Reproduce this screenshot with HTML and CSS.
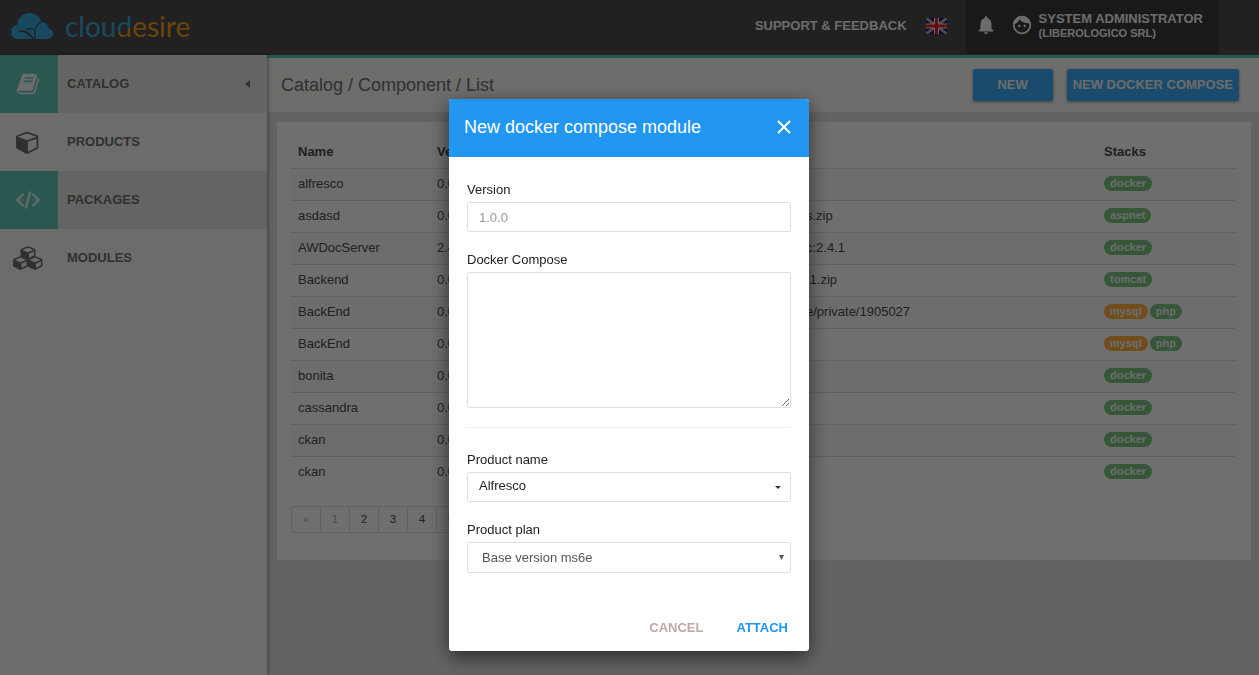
FILE: index.html
```html
<!DOCTYPE html>
<html lang="en">
<head>
<meta charset="utf-8">
<title>Cloudesire - Components</title>
<link rel="stylesheet" href="styles.css">
</head>
<body>
<div class="app">
  <header class="topbar">
    <a class="brand" href="#">
      <svg class="brand-cloud" viewBox="0 0 42 26" aria-hidden="true">
        <path fill="#36a9d6" d="M6.500 12C6.500 5 12 0 18.500 0c6 0 11 4 12 9 4 0 6.500 2.500 7 6.500 3 .8 4.500 2.800 4.500 5 0 3-2.500 5.500-6 5.500H6.500C3 26 0 23 0 19c0-3.800 2.500-6.600 6.500-7z"/>
        <path fill="#4d4d4d" d="M6 18.500c6-2.500 12-1.500 17 7.500h-1.500c-4-5-9-8-15.500-7.500z"/>
        <path fill="none" stroke="#4d4d4d" stroke-width="1.300" d="M24 26c-1-9 .5-16 7-17.200M15.500 16.500c3-1.300 6-1.300 8.300.5"/>
      </svg>
      <span class="brand-name">clou<span class="brand-d">d</span><span class="brand-end">esire</span></span>
    </a>
    <div class="tools">
      <a class="support" href="#">SUPPORT &amp; FEEDBACK</a>
      <button class="icon-btn" aria-label="Language: English">
        <svg width="21" height="16" viewBox="0 0 21 16">
          <path fill="#171782" d="M0 0h21v16H0z"/>
          <path stroke="#e8e8e8" stroke-width="2.400" d="M0 0l21 16M21 0L0 16"/>
          <path stroke="#d22" stroke-width=".8" d="M0 0l21 16M21 0L0 16"/>
          <path stroke="#e8e8e8" stroke-width="5" d="M10.500 0v16M0 8h21"/>
          <path stroke="#d22" stroke-width="3" d="M10.500 0v16M0 8h21"/>
        </svg>
      </button>
      <div class="account">
        <button class="icon-btn" aria-label="Notifications">
          <svg width="22" height="22" viewBox="0 0 24 24" fill="currentColor"><path d="M12 22c1.100 0 2-.9 2-2h-4c0 1.100.89 2 2 2zm6-6v-5c0-3.070-1.640-5.640-4.500-6.320V4c0-.83-.67-1.500-1.500-1.500s-1.500.67-1.500 1.500v.68C7.630 5.360 6 7.920 6 11v5l-2 2v1h16v-1l-2-2z"/></svg>
        </button>
        <button class="user">
          <svg width="22" height="22" viewBox="0 0 24 24" fill="currentColor" aria-hidden="true"><path d="M9 11.750c-.69 0-1.250.56-1.250 1.250s.56 1.250 1.250 1.250 1.250-.56 1.250-1.250-.56-1.250-1.250-1.250zm6 0c-.69 0-1.250.56-1.250 1.250s.56 1.250 1.250 1.250 1.250-.56 1.250-1.250-.56-1.250-1.250-1.250zM12 2C6.480 2 2 6.480 2 12s4.480 10 10 10 10-4.480 10-10S17.520 2 12 2zm0 18c-4.410 0-8-3.590-8-8 0-.29.02-.58.05-.86 2.360-1.050 4.230-2.980 5.210-5.370C11.070 8.330 14.050 10 17.420 10c.78 0 1.530-.09 2.250-.26.21.71.33 1.470.33 2.260 0 4.410-3.590 8-8 8z"/></svg>
          <span class="user-text"><span>SYSTEM ADMINISTRATOR</span><small>(LIBEROLOGICO SRL)</small></span>
        </button>
      </div>
    </div>
  </header>

  <div class="columns">
    <nav class="sidebar">
      <a class="item active" href="#">
        <span class="item-icon"><svg width="24" height="24" viewBox="0 0 1792 1792" fill="currentColor"><path d="M1703 478q40 57 18 129l-275 906q-19 64-76.500 107.500t-122.500 43.500h-923q-77 0-148.500-53.500t-99.500-131.500q-24-67-2-127 0-4 3-27t4-37q1-8-3-21.500t-3-19.500q2-11 8-21t16.500-23.500 16.500-23.500q23-38 45-91.500t30-91.500q3-10 .5-30t-.5-28q3-11 17-28t17-23q21-36 42-92t25-90q1-9-2.500-32t.5-28q4-13 22-30.500t22-22.500q19-26 42.500-84.500t27.500-96.500q1-8-3-25.500t-2-26.500q2-8 9-18t18-23 17-21q8-12 16.500-30.500t15-35 16-36 19.500-32 26.500-23.500 36-11.500 47.500 5.500l-1 3q38-9 51-9h761q74 0 114 56t18 130l-274 906q-36 119-71.500 153.500t-128.500 34.500h-869q-27 0-38 15-11 16-1 43 24 70 144 70h923q29 0 56-15.500t35-41.500l300-987q7-22 5-57 38 15 59 43zm-1064 2q-4 13 2 22.500t20 9.500h608q13 0 25.500-9.500t16.500-22.500l21-64q4-13-2-22.500t-20-9.500h-608q-13 0-25.500 9.500t-16.500 22.500zm-83 256q-4 13 2 22.500t20 9.500h608q13 0 25.500-9.500t16.500-22.500l21-64q4-13-2-22.500t-20-9.500h-608q-13 0-25.500 9.500t-16.500 22.500z"/></svg></span>
        <span class="item-label">CATALOG</span>
        <svg class="item-caret" width="5" height="8" viewBox="0 0 5 8" fill="currentColor"><path d="M5 0v8L0 4z"/></svg>
      </a>
      <a class="item" href="#">
        <span class="item-icon"><svg width="24" height="24" viewBox="0 0 1792 1792" fill="currentColor"><path d="M896 1629l640-349v-636l-640 233v752zm-64-865l698-254-698-254-698 254zm832-252v768q0 35-18 65t-49 47l-704 384q-28 16-61 16t-61-16l-704-384q-31-17-49-47t-18-65v-768q0-40 23-73t61-47l704-256q22-8 44-8t44 8l704 256q38 14 61 47t23 73z"/></svg></span>
        <span class="item-label">PRODUCTS</span>
      </a>
      <a class="item active" href="#">
        <span class="item-icon"><svg width="24" height="18" viewBox="0 0 24 18" fill="none" stroke="currentColor" stroke-width="2"><path d="M7.500 3L1.500 9l6 6M16.500 3l6 6-6 6M14.200 .5L9.800 17.500"/></svg></span>
        <span class="item-label">PACKAGES</span>
      </a>
      <a class="item" href="#">
        <span class="item-icon"><svg width="30" height="24" viewBox="0 0 30 24">
          <defs>
            <g id="cube">
              <path fill="currentColor" d="M7.500 0L14.200 2.800Q15 3.200 15 4v5.500q0 .8-.7 1.200L8.200 13.800q-.7.300-1.400 0L.7 10.700Q0 10.300 0 9.500V4q0-.8.8-1.200z"/>
              <path fill="#f5f5f1" d="M7.500 1.600L13 3.900 7.500 6.200 2 3.900zM8.500 7.700L13.500 5.600v3.700L8.500 11.900z"/>
            </g>
          </defs>
          <use href="#cube" x="7.500"/>
          <use href="#cube" y="10"/>
          <use href="#cube" x="14.500" y="10"/>
        </svg></span>
        <span class="item-label">MODULES</span>
      </a>
    </nav>

    <main class="main">
      <div class="pagehead">
        <h1 class="crumbs">Catalog / Component / List</h1>
        <button class="btn">NEW</button>
        <button class="btn">NEW DOCKER COMPOSE</button>
      </div>
      <section class="panel">
        <table class="grid">
          <colgroup><col class="c-name"><col class="c-version"><col class="c-file"><col class="c-stacks"></colgroup>
          <thead><tr><th>Name</th><th>Version</th><th></th><th>Stacks</th></tr></thead>
          <tbody>
            <tr><td>alfresco</td><td>0.0.1</td><td></td><td><span class="tag">docker</span></td></tr>
            <tr><td>asdasd</td><td>0.0.1</td><td>s.zip</td><td><span class="tag">aspnet</span></td></tr>
            <tr><td>AWDocServer</td><td>2.4.1</td><td>c:2.4.1</td><td><span class="tag">docker</span></td></tr>
            <tr><td>Backend</td><td>0.0.1</td><td>.1.zip</td><td><span class="tag">tomcat</span></td></tr>
            <tr><td>BackEnd</td><td>0.0.1</td><td>e/private/1905027</td><td><span class="tag db">mysql</span><span class="tag">php</span></td></tr>
            <tr><td>BackEnd</td><td>0.0.1</td><td></td><td><span class="tag db">mysql</span><span class="tag">php</span></td></tr>
            <tr><td>bonita</td><td>0.0.1</td><td></td><td><span class="tag">docker</span></td></tr>
            <tr><td>cassandra</td><td>0.0.1</td><td></td><td><span class="tag">docker</span></td></tr>
            <tr><td>ckan</td><td>0.0.1</td><td></td><td><span class="tag">docker</span></td></tr>
            <tr><td>ckan</td><td>0.0.1</td><td></td><td><span class="tag">docker</span></td></tr>
          </tbody>
        </table>
        <div class="pager">
          <button disabled>«</button><button disabled>1</button><button>2</button><button>3</button><button>4</button><button>5</button>
        </div>
      </section>
    </main>
  </div>
</div>

<div class="overlay">
  <form class="modal" role="dialog" aria-labelledby="modal-title">
    <div class="modal-head">
      <h2 id="modal-title">New docker compose module</h2>
      <button type="button" class="close" aria-label="Close"><svg width="14" height="14" viewBox="0 0 14 14" fill="none" stroke="currentColor" stroke-width="2"><path d="M1 1l12 12M13 1L1 13"/></svg></button>
    </div>
    <div class="modal-body">
      <div class="field">
        <label for="version">Version</label>
        <input id="version" class="control" type="text" placeholder="1.0.0">
      </div>
      <div class="field">
        <label for="compose">Docker Compose</label>
        <textarea id="compose" class="control area"></textarea>
      </div>
      <hr>
      <div class="field">
        <label for="product">Product name</label>
        <div class="select">
          <select id="product" class="control"><option>Alfresco</option></select>
          <svg width="6" height="3" viewBox="0 0 6 3"><path d="M0 0h6L3 3z"/></svg>
        </div>
      </div>
      <div class="field">
        <label for="plan">Product plan</label>
        <div class="select plan">
          <select id="plan" class="control"><option>Base version ms6e</option></select>
          <svg width="5" height="5" viewBox="0 0 5 5"><path d="M0 0h5L2.500 5z"/></svg>
        </div>
      </div>
    </div>
    <div class="modal-foot">
      <button type="button" class="link cancel">CANCEL</button>
      <button type="submit" class="link">ATTACH</button>
    </div>
  </form>
</div>
</body>
</html>
```
FILE: styles.css
```css
* { box-sizing: border-box; }
body {
  margin: 0;
  font: 13px/18px "Liberation Sans", Arial, sans-serif;
  color: #333;
}
a { color: inherit; text-decoration: none; }
button, input, select, textarea { font: inherit; color: inherit; }
button { border: 0; background: none; padding: 0; cursor: pointer; }
h1, h2 { margin: 0; font-weight: 400; font-size: 18px; line-height: 24px; }
svg { display: block; flex: none; }

.app { min-height: 100vh; display: flex; flex-direction: column; background: #e2e2e2; }

/* Top bar */
.topbar {
  display: flex; justify-content: space-between;
  height: 55px; padding: 0 40px 0 11px;
  background: #4d4d4d; color: #f5f5f5; font-weight: 700;
}
.brand { display: flex; align-items: center; gap: 12px; padding-bottom: 3px; }
.brand-cloud { width: 42px; height: 26px; }
.brand-name { font: 400 28px/34px Lato, "Open Sans", sans-serif; color: #36a9d6; }
.brand-d {
  background: linear-gradient(155deg, #36a9d6 60%, #ee9a1c 60%);
  background-clip: text; -webkit-background-clip: text; color: transparent;
}
.brand-end { color: #ee9a1c; }
.tools { display: flex; align-items: stretch; gap: 19px; }
.support { align-self: center; padding-bottom: 4px; }
.icon-btn { display: flex; align-items: center; padding-bottom: 4px; }
.account {
  display: flex; gap: 14px; margin-bottom: 1px; padding: 0 16px 0 9px;
  background: #393939; border-radius: 0 0 3px 3px;
}
.user { display: flex; align-items: center; gap: 6px; padding-bottom: 4px; font-weight: 700; text-align: left; }
.user-text { display: flex; flex-direction: column; line-height: 15px; }
.user-text small { font-size: 11px; line-height: 14px; }

/* Sidebar */
.columns { flex: 1; display: flex; }
.sidebar { flex: 0 0 267px; background: #f5f5f1; box-shadow: 1px 0 4px rgba(0, 0, 0, .4); z-index: 1; }
.item { display: flex; align-items: center; height: 58px; font-weight: 700; color: #6e6e6e; }
.item-icon { width: 58px; height: 58px; padding-right: 2px; display: flex; align-items: center; justify-content: center; }
.item-label { flex: 1; padding-left: 9px; }
.item-caret { margin-right: 17px; }
.item.active { background: #e4e4e0; }
.item.active .item-icon { background: #62c6b9; color: #f5f5f5; }

/* Main column */
.main { flex: 1; min-width: 0; border-top: 3px solid #62c6b9; }
.pagehead {
  display: flex; align-items: center; gap: 14px;
  height: 54px; padding: 0 20px 0 14px; background: #f7f7f3;
}
.crumbs { flex: 1; color: #6e6e6e; }
.btn {
  height: 32px; min-width: 80px; padding: 0 6px; border-radius: 2px;
  background: #3babf6; color: #f5f5f5; font-weight: 700;
  box-shadow: 0 1px 3px rgba(0, 0, 0, .4);
}
.panel { margin: 10px 8px 0 10px; padding: 14px 15px 27px 14px; background: #fcfcfc; }
.grid { width: 100%; border-collapse: collapse; table-layout: fixed; }
.c-name { width: 139px; }
.c-version { width: 369px; }
.c-stacks { width: 139px; }
.grid th, .grid td { height: 32px; padding: 0 7px; text-align: left; white-space: nowrap; color: #4a4a4a; }
.grid td { border-top: 1px solid #dcdcdc; }
.grid tbody tr:nth-child(odd) { background: #f8f8f8; }
.tag {
  display: inline-block; vertical-align: text-bottom;
  margin-right: 2px; padding: 0 6px; border-radius: 8px;
  background: #7ac57e; color: #f5f5f5; font-weight: 700; font-size: 11px; line-height: 15px;
}
.tag.db { background: #ffb03f; }
.pager { display: flex; padding: 18px 0 0; }
.pager button {
  width: 30px; height: 27px; margin-right: -1px; padding-bottom: 1px;
  border: 1px solid #dadada; border-radius: 2px; font-size: 11px; color: #4a4a4a;
}
.pager button:disabled { color: #aaa; }

/* Dialog */
.overlay {
  position: fixed; inset: 0; z-index: 10; overflow: auto;
  display: flex; justify-content: center; align-items: flex-start;
  padding: 99px 17px 24px 16px; background: rgba(0, 0, 0, .56);
}
.modal { width: 360px; background: #fff; border-radius: 3px; box-shadow: 0 6px 20px rgba(0, 0, 0, .6); color: #212121; }
.modal-head {
  display: flex; align-items: center; justify-content: space-between;
  height: 58px; padding: 0 18px 2px 15px;
  background: #2196f3; color: #fff; border-radius: 3px 3px 0 0;
}
.modal-body { display: flex; flex-direction: column; gap: 19px; padding: 24px 18px 37px; }
.field { display: flex; flex-direction: column; gap: 3px; }
.control {
  width: 100%; height: 30px; padding: 0 11px;
  border: 1px solid #e0e0e0; border-radius: 2px; background: #fff; outline: 0;
}
.control::placeholder { color: #999; opacity: 1; }
.area { display: block; height: 136px; padding: 6px 11px; resize: vertical; }
hr { width: 100%; margin: 0 0 4px; border: 0; border-top: 1px solid #eee; }
.select { display: grid; align-items: center; }
.select > * { grid-area: 1 / 1; }
.select select { appearance: none; padding: 0 11px 3px; }
.select svg { justify-self: end; margin-right: 10px; pointer-events: none; fill: #333; }
.plan select { height: 31px; padding: 0 14px; color: #555; }
.plan svg { margin-right: 7px; fill: #555; }
.modal-foot { display: flex; justify-content: flex-end; gap: 33px; padding: 0 21px 5px; }
.link { height: 36px; font-weight: 700; color: #2196f3; }
.cancel { color: #bcaaa4; }
```
